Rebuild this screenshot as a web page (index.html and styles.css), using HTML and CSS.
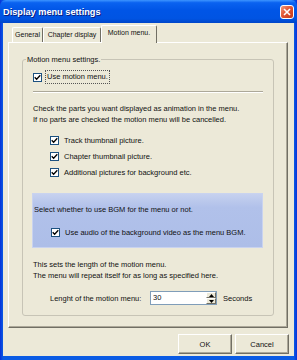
FILE: index.html
```html
<!DOCTYPE html>
<html lang="en">
<head>
  <meta charset="UTF-8">
  <title>Display menu settings</title>
  <link rel="stylesheet" href="styles.css">
</head>
<body>
  <div class="window">
    <div class="titlebar">
      <span class="title">Display menu settings</span>
      <span class="close">
        <svg width="8" height="8" viewBox="0 0 8 8"><path d="M1 1L7 7M7 1L1 7" stroke="#fff" stroke-width="1.6"/></svg>
      </span>
    </div>

    <div class="client">
      <div class="tabs">
        <div class="tab tab-general">General</div>
        <div class="tab tab-chapter">Chapter display</div>
        <div class="tab tab-motion active">Motion menu.</div>
      </div>

      <div class="panel">
        <fieldset class="group">
          <legend>Motion menu settings.</legend>

          <div class="check use-row">
            <span class="box"><svg width="7" height="7" viewBox="0 0 7 7"><path d="M0.7 3.3L2.6 5.2L6.3 1.2" stroke="#000" stroke-width="1.3" fill="none"/></svg></span>
            <span class="focus">Use motion menu.</span>
          </div>

          <div class="sep"></div>

          <p class="note">Check the parts you want displayed as animation in the menu.<br>If no parts are checked the motion menu will be cancelled.</p>

          <div class="parts">
            <div class="check"><span class="box"><svg width="7" height="7" viewBox="0 0 7 7"><path d="M0.7 3.3L2.6 5.2L6.3 1.2" stroke="#000" stroke-width="1.3" fill="none"/></svg></span>Track thumbnail picture.</div>
            <div class="check"><span class="box"><svg width="7" height="7" viewBox="0 0 7 7"><path d="M0.7 3.3L2.6 5.2L6.3 1.2" stroke="#000" stroke-width="1.3" fill="none"/></svg></span>Chapter thumbnail picture.</div>
            <div class="check"><span class="box"><svg width="7" height="7" viewBox="0 0 7 7"><path d="M0.7 3.3L2.6 5.2L6.3 1.2" stroke="#000" stroke-width="1.3" fill="none"/></svg></span>Additional pictures for background etc.</div>
          </div>

          <div class="bgm">
            <p class="bgm-text">Select whether to use BGM for the menu or not.</p>
            <div class="check"><span class="box"><svg width="7" height="7" viewBox="0 0 7 7"><path d="M0.7 3.3L2.6 5.2L6.3 1.2" stroke="#000" stroke-width="1.3" fill="none"/></svg></span>Use audio of the background video as the menu BGM.</div>
          </div>

          <p class="note length-note">This sets the length of the motion menu.<br>The menu will repeat itself for as long as specified here.</p>

          <div class="length-row">
            <span class="length-label">Lenght of the motion menu:</span>
            <span class="spin">
              <span class="spin-value">30</span>
              <span class="spin-btns">
                <span class="spin-btn"><svg width="5" height="3" viewBox="0 0 5 3"><path d="M0 3L2.5 0L5 3Z" fill="#000"/></svg></span>
                <span class="spin-btn"><svg width="5" height="3" viewBox="0 0 5 3"><path d="M0 0L2.5 3L5 0Z" fill="#000"/></svg></span>
              </span>
            </span>
            <span class="seconds">Seconds</span>
          </div>
        </fieldset>
      </div>

      <div class="buttons">
        <button class="btn">OK</button>
        <button class="btn">Cancel</button>
      </div>
    </div>
  </div>
</body>
</html>
```

FILE: styles.css
```css
body {
  margin: 0;
  font-family: "Liberation Sans", Arial, sans-serif;
  font-size: 7.5px;
  color: #111;
  background: #fff;
}
p {
  margin: 0;
}
.window {
  width: 297px;
  height: 360px;
  display: flex;
  flex-direction: column;
  background: linear-gradient(to right, #0831d9, #0a5be4 3px, #0a5be4 294px, #0831d9);
}
.titlebar {
  height: 23px;
  flex: none;
  display: flex;
  align-items: center;
  justify-content: space-between;
  padding: 0 3px 0 3px;
  background: linear-gradient(#3d95ff 0%, #0a62f0 12%, #0055e6 45%, #0054e3 80%, #0046c9 100%);
  border-radius: 6px 6px 0 0;
}
.title {
  color: #fff;
  font-weight: bold;
  font-size: 9.2px;
  text-shadow: 1px 1px 0 #0a1e80;
}
.close {
  width: 14px;
  height: 14px;
  box-sizing: border-box;
  border: 1px solid #fff;
  border-radius: 3px;
  background: linear-gradient(135deg, #f09a7e, #e25634 45%, #c1391c);
  display: flex;
  align-items: center;
  justify-content: center;
}
.client {
  flex: 1;
  margin: 0 3px 4px;
  background: #ece9d8;
  display: flex;
  flex-direction: column;
}
.tabs {
  display: flex;
  align-items: flex-end;
  padding: 2px 0 0 9px;
  height: 17px;
  position: relative;
  z-index: 1;
}
.tab {
  height: 15px;
  box-sizing: border-box;
  font-size: 7px;
  line-height: 14px;
  text-align: center;
  border-top: 1px solid #fff;
  border-left: 1px solid #fff;
  border-right: 1px solid #716f64;
  border-radius: 2px 2px 0 0;
  background: #ece9d8;
}
.tab-general {
  width: 31px;
}
.tab-chapter {
  width: 58px;
}
.tab-motion {
  width: 56px;
}
.tab.active {
  height: 18px;
  margin-bottom: -1px;
}
.panel {
  height: 286px;
  box-sizing: border-box;
  margin: 0 6px 0 5px;
  padding: 11px 0 0 13px;
  border-top: 1px solid #fff;
  border-left: 1px solid #fff;
  border-right: 1px solid #716f64;
  border-bottom: 1px solid #716f64;
  box-shadow: inset -1px -1px 0 #aca899;
}
.group {
  width: 252px;
  height: 262px;
  box-sizing: border-box;
  margin: 0;
  padding: 0 10px;
  border: 1px solid #c7c4b6;
  border-radius: 3px;
}
.group legend {
  padding: 0 1px;
  margin-left: -7px;
  line-height: 11px;
}
.check {
  display: flex;
  align-items: center;
  height: 16px;
}
.box {
  width: 9px;
  height: 9px;
  box-sizing: border-box;
  border: 1px solid #1c5180;
  background: #fff;
  margin-right: 5px;
  display: flex;
  align-items: center;
  justify-content: center;
}
.focus {
  border: 1px dotted #555;
  padding: 1px 1px;
  margin-left: -2px;
  line-height: 10px;
}
.use-row {
  margin-top: 4px;
}
.sep {
  margin-top: 6px;
  border-top: 1px solid #aca899;
  border-bottom: 1px solid #fff;
}
.note {
  margin-top: 10px;
  line-height: 11px;
}
.parts {
  margin-top: 7px;
  padding-left: 17px;
}
.bgm {
  width: 231px;
  box-sizing: border-box;
  margin: 13px 0 0 -1px;
  padding: 10px 0 7px 1px;
  border: 1px solid #c9d3ef;
  background: linear-gradient(#c6d1ef, #b1c1ea 25%, #adbee8);
}
.bgm-text {
  line-height: 11px;
}
.bgm .check {
  margin: 9px 0 0 17px;
}
.length-note {
  margin-top: 11px;
}
.length-row {
  display: flex;
  align-items: center;
  height: 14px;
  margin-top: 10px;
  padding-left: 17px;
}
.length-label {
  width: 100px;
}
.spin {
  width: 67px;
  height: 14px;
  box-sizing: border-box;
  border: 1px solid #7f9db9;
  background: #fff;
  display: flex;
  justify-content: space-between;
}
.spin-value {
  padding-left: 2px;
  line-height: 12px;
}
.spin-btns {
  width: 10px;
  display: flex;
  flex-direction: column;
}
.spin-btn {
  flex: 1;
  background: #ece9d8;
  border: 1px solid;
  border-color: #fff #716f64 #716f64 #fff;
  display: flex;
  align-items: center;
  justify-content: center;
}
.seconds {
  margin-left: 6px;
}
.buttons {
  display: flex;
  justify-content: flex-end;
  gap: 3px;
  margin: 6px 5px 0 0;
}
.btn {
  width: 54px;
  height: 20px;
  padding: 0;
  font-family: inherit;
  font-size: 7.5px;
  color: #111;
  background: #ece9d8;
  border: 1px solid;
  border-color: #fff #716f64 #716f64 #fff;
  box-shadow: inset -1px -1px 0 #aca899;
}
```
